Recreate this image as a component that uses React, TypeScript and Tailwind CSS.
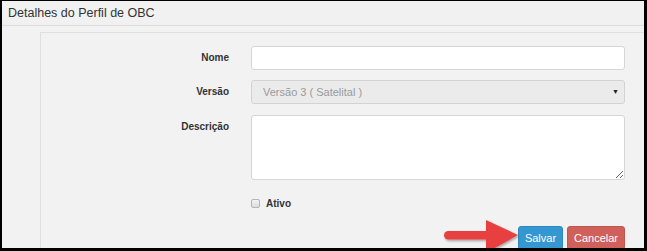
import React from "react"

function Arrow() {
    return (
        <svg className="absolute left-[440px] top-[216px]" width="80" height="36" viewBox="0 0 80 36">
            <defs>
                <filter id="sh" x="-10%" y="-20%" width="130%" height="150%">
                    <feDropShadow dx="1" dy="1.5" stdDeviation="1" floodColor="#000" floodOpacity="0.35" />
                </filter>
            </defs>
            <g filter="url(#sh)" fill="#e8413f">
                <rect x="2" y="14" width="46" height="8.5" rx="4.25" />
                <polygon points="44,3 76,18 44,36" />
            </g>
        </svg>
    )
}

export default function App() {
    const font = { fontFamily: '"Liberation Sans", Arial, sans-serif' }
    return (
        <div
            className="relative w-[647px] h-[251px] overflow-hidden bg-[#f2f2f2] border-l-2 border-t border-r-[3px] border-b-[3px] border-black"
            style={font}
        >
            <div className="h-[25px] border-b border-[#dcdcdc] bg-[#f1f1f1] pl-[6px] flex items-center text-[12.5px] text-[#333]">
                Detalhes do Perfil de OBC
            </div>
            <div className="mt-[6px] ml-[38px] h-[220px] border-t border-l border-[#dfdfdf] bg-[#f2f2f2] pt-[13px]">
                <div className="flex flex-col gap-[10px]">
                    <div className="flex items-start">
                        <label className="w-[188px] text-right text-[10px] font-bold text-[#333] leading-[24px]">Nome</label>
                        <input className="ml-[22px] w-[374px] h-[24px] bg-white border border-[#d6d6d6] rounded-[3px] outline-none" />
                    </div>
                    <div className="flex items-start">
                        <label className="w-[188px] text-right text-[10px] font-bold text-[#333] leading-[24px]">Versão</label>
                        <div className="ml-[22px] w-[374px] h-[24px] bg-[#ebebeb] border border-[#d3d3d3] rounded-[3px] flex items-center justify-between pl-[11px] pr-[5px] text-[11px] text-[#9a9a9a]">
                            <span>Versão 3 ( Satelital )</span>
                            <span className="text-[7px] text-[#222]">▼</span>
                        </div>
                    </div>
                    <div className="flex items-start mt-[1px]">
                        <label className="w-[188px] text-right text-[10px] font-bold text-[#333] leading-[24px]">Descrição</label>
                        <textarea className="ml-[22px] w-[374px] h-[65px] bg-white border border-[#d6d6d6] rounded-[3px] outline-none resize" />
                    </div>
                    <div className="flex items-center ml-[210px] mt-[8px] h-[10px]">
                        <span className="w-[9px] h-[9px] rounded-[2px] border border-[#b5b5b5] bg-gradient-to-b from-[#f4f4f4] to-[#dcdcdc]" />
                        <span className="ml-[6px] text-[10px] font-bold text-[#333]">Ativo</span>
                    </div>
                    <div className="flex justify-end gap-[4px] w-[584px] mt-[8px]">
                        <button className="w-[45px] h-[24px] rounded-[3px] bg-[#3597d1] border border-[#2e87bd] text-white text-[11px]">
                            Salvar
                        </button>
                        <button className="w-[58px] h-[24px] rounded-[3px] bg-[#d0605a] border border-[#c1554f] text-white text-[11px]">
                            Cancelar
                        </button>
                    </div>
                </div>
            </div>
            <Arrow />
        </div>
    )
}
